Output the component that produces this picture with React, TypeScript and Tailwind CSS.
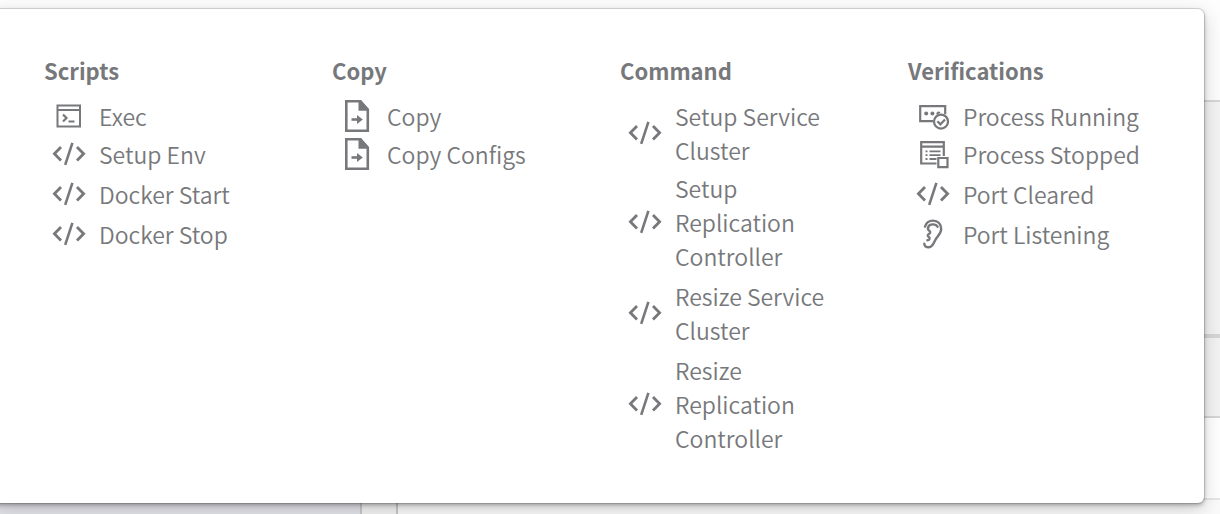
import type { ReactNode } from "react";

function CodeIcon() {
  return (
    <svg width="34" height="24" viewBox="0 0 34 24" fill="none" stroke="currentColor" strokeWidth="2.8" aria-hidden="true">
      <path d="M9 5 2.4 11.8 9 18.6M25 5l6.6 6.8L25 18.6" />
      <path d="M20.4 .8 13.2 22.8" strokeWidth="2.6" />
    </svg>
  );
}

function ExecIcon() {
  return (
    <svg width="26" height="24" viewBox="0 0 26 24" fill="none" stroke="currentColor" strokeWidth="2" aria-hidden="true">
      <path d="M1.5 1.5H24v21H1.5zM1.5 6H24" />
      <path d="m7 10.5 3.5 3.5L7 17.5M12.5 17.5h6" strokeWidth="2.2" />
    </svg>
  );
}

function CopyIcon() {
  return (
    <svg width="26" height="34" viewBox="0 0 26 34" fill="none" aria-hidden="true">
      <path d="M2.3 2.3h14.2L23.8 11v20.8H2.3z" stroke="currentColor" strokeWidth="2.6" />
      <path d="M14.5 1.5H17l8 8.5v1.8H14.5z" fill="currentColor" />
      <path d="M7.5 20.5h7" stroke="currentColor" strokeWidth="2.6" />
      <path d="m13 16 5.8 4.5L13 25z" fill="currentColor" />
    </svg>
  );
}

function RunningIcon() {
  return (
    <svg width="32" height="28" viewBox="0 0 32 28" fill="none" stroke="currentColor" strokeWidth="2.2" aria-hidden="true">
      <path d="M16 19.2H3.2V4.2h25v8" />
      <g fill="currentColor" stroke="none">
        <circle cx="9.2" cy="11.6" r="2" />
        <circle cx="15.4" cy="11.6" r="2" />
        <path d="M19.6 12.8a2 2 0 0 1 3.9-2z" />
      </g>
      <circle cx="24" cy="19.6" r="7" />
      <path d="m20.4 19.2 3 3.1 4.6-4.9" />
    </svg>
  );
}

function StoppedIcon() {
  return (
    <svg width="32" height="30" viewBox="0 0 32 30" fill="none" stroke="currentColor" strokeWidth="2.2" aria-hidden="true">
      <path d="M19.5 24.5H4.2V3.2h22.6V17M4.2 7.6h22.6" />
      <path d="M8.5 12.4h2M12.5 12.4h11M8.5 16.2h2M12.5 16.2h11M8.5 20h2M12.5 20h7" strokeWidth="1.8" />
      <path d="M21.3 19h9.2v9.2h-9.2z" />
    </svg>
  );
}

function EarIcon() {
  return (
    <svg width="22" height="30" viewBox="0 0 22 30" fill="none" stroke="currentColor" strokeWidth="2.4" strokeLinecap="round" strokeLinejoin="round" aria-hidden="true">
      <path d="M3 7.6C4.2 3.6 7.2 1.6 11 1.6c5 0 8.4 3.6 8.2 8.6-.2 4.6-3.6 6.9-5.7 10.4-1.6 2.7-2.6 7.4-6.5 7.7-2.8.2-4.6-1.3-4.7-3.6" />
      <path d="M6 9.4c.2-2.6 2.4-4 5-4 2.2 0 3.8.9 4.6 2.4" />
      <path d="M6 9.4c-.5 2.3 2.8 2.2 2.2 4.3-.5 1.6-2.6 1.3-2.4 3 .2 1.3 2 1.1 1.8 2.8-.2 1.2-1.1 1.7-2.2 1.8" />
    </svg>
  );
}

type Item = { label: string; icon: ReactNode };
type Group = { title: string; items: Item[] };

const groups: Group[] = [
  {
    title: "Scripts",
    items: [
      { label: "Exec", icon: <ExecIcon /> },
      { label: "Setup Env", icon: <CodeIcon /> },
      { label: "Docker Start", icon: <CodeIcon /> },
      { label: "Docker Stop", icon: <CodeIcon /> },
    ],
  },
  {
    title: "Copy",
    items: [
      { label: "Copy", icon: <CopyIcon /> },
      { label: "Copy Configs", icon: <CopyIcon /> },
    ],
  },
  {
    title: "Command",
    items: [
      { label: "Setup Service Cluster", icon: <CodeIcon /> },
      { label: "Setup Replication Controller", icon: <CodeIcon /> },
      { label: "Resize Service Cluster", icon: <CodeIcon /> },
      { label: "Resize Replication Controller", icon: <CodeIcon /> },
    ],
  },
  {
    title: "Verifications",
    items: [
      { label: "Process Running", icon: <RunningIcon /> },
      { label: "Process Stopped", icon: <StoppedIcon /> },
      { label: "Port Cleared", icon: <CodeIcon /> },
      { label: "Port Listening", icon: <EarIcon /> },
    ],
  },
];

function MenuGroup({ title, items }: Group) {
  return (
    <section className="pr-[52px]">
      <h2 className="mb-3 text-[22px] leading-[34px] font-bold">{title}</h2>
      <ul>
        {items.map((item) => (
          <li key={item.label} className="mb-[6px] first:mb-1">
            <button type="button" className="flex w-full items-center text-left text-[23px] leading-[34px] font-[350]">
              <span className="mr-[5px] flex h-[34px] w-[50px] shrink-0 items-center justify-center">{item.icon}</span>
              <span>{item.label}</span>
            </button>
          </li>
        ))}
      </ul>
    </section>
  );
}

export default function App() {
  return (
    <div className="grid min-h-screen overflow-hidden bg-white font-['Noto_Sans_CJK_SC',sans-serif] text-[#77787b]">
      <div className="col-start-1 row-start-1 flex flex-col" aria-hidden="true">
        <div className="h-[102px] border-b-2 border-[#d6d6d6] bg-[#fdfdfd]" />
        <div className="h-[236px] border-b-4 border-[#d6d6d6] bg-[#f3f3f3]" />
        <div className="h-20 border-b-2 border-[#d6d6d6] bg-[#f3f3f3]" />
        <div className="h-[82px] border-b-2 border-[#e6e6e6] bg-white" />
        <div className="flex grow">
          <div className="w-[362px] border-r-2 border-[#c8c8c8] bg-[#e3e3ea]" />
          <div className="w-9 border-r-2 border-[#c8c8c8] bg-[#f3f3f3]" />
          <div className="grow bg-[#fafafa]" />
        </div>
      </div>
      <div className="z-10 col-start-1 row-start-1 mt-[9px] mr-4 -ml-2 grid grid-cols-4 self-start rounded-md bg-white pt-11 pr-2 pb-[42px] pl-[52px] shadow-[0_0_0_1px_rgba(0,0,0,0.12),0_2px_4px_rgba(0,0,0,0.3),0_6px_20px_rgba(0,0,0,0.18)]">
        {groups.map((group) => (
          <MenuGroup key={group.title} {...group} />
        ))}
      </div>
    </div>
  );
}
